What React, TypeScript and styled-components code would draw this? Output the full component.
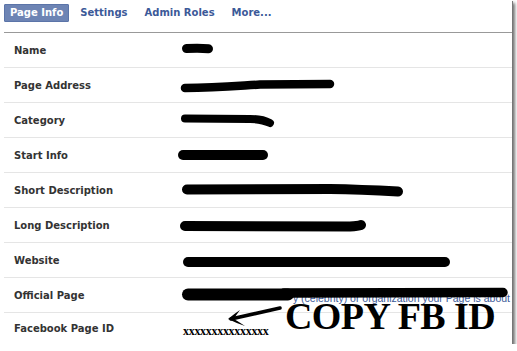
import React from "react";
import styled, { createGlobalStyle } from "styled-components";

const GlobalStyle = createGlobalStyle`
    html, body {
        margin: 0;
        padding: 0;
        background: #fff;
    }
    body {
        font-family: "DejaVu Sans", Verdana, sans-serif;
    }
`;

const Frame = styled.div`
    position: relative;
    width: 512px;
    height: 344px;
    background: #fff;
    overflow: hidden;
    box-shadow: 1px 1px 0 #777, 3px 3px 3px rgba(0, 0, 0, 0.55);
`;

const TabBar = styled.div`
    display: flex;
    align-items: flex-start;
    gap: 5px;
    margin-left: 4px;
    padding-top: 4px;
    height: 28px;
    border-bottom: 1px solid #999;
`;

const Tab = styled.div<{ $active?: boolean }>`
    height: 16px;
    line-height: 16px;
    padding: 0 5px;
    font-size: 10px;
    font-weight: bold;
    border: 1px solid ${(p) => (p.$active ? "#5b74a8" : "transparent")};
    border-radius: 1px;
    background: ${(p) => (p.$active ? "#6d84b4" : "transparent")};
    color: ${(p) => (p.$active ? "#fff" : "#3b5998")};
`;

const Table = styled.div`
    margin-left: 4px;
`;

const Row = styled.div<{ $h?: number }>`
    display: grid;
    grid-template-columns: 162px 1fr;
    align-items: center;
    height: ${(p) => p.$h || 34}px;
    padding-left: 10px;
    border-bottom: 1px solid #e5e5e5;
    &:last-child {
        border-bottom: none;
    }
`;

const Label = styled.div`
    font-size: 10px;
    font-weight: bold;
    color: #333;
`;

const Value = styled.div`
    position: relative;
    display: flex;
    align-items: center;
    height: 100%;
    overflow: hidden;
`;

const HintValue = styled(Value)`
    justify-content: flex-end;
    padding-right: 2px;
`;

const Hint = styled.span`
    flex-shrink: 0;
    margin-top: 5px;
    line-height: 10px;
    white-space: nowrap;
    font-family: "Liberation Sans", Arial, sans-serif;
    font-size: 10.5px;
    color: #3b5998;
`;

const Cover = styled.svg`
    position: absolute;
    left: 0;
    top: 7px;
`;

const PageId = styled.span`
    margin: 5px 0 0 7px;
    font-family: "Liberation Serif", "Times New Roman", serif;
    font-size: 12px;
    font-weight: bold;
    letter-spacing: -0.3px;
    color: #000;
`;

const Note = styled.div`
    position: absolute;
    left: 226px;
    top: 305px;
    display: flex;
    align-items: flex-start;
`;

const NoteText = styled.div`
    margin: -1px 0 0 1px;
    font-family: "Liberation Serif", "Times New Roman", serif;
    font-size: 38px;
    line-height: 24px;
    font-weight: bold;
    letter-spacing: -0.6px;
    color: #000;
`;

type Scribble = { w: number; d: string; sw: number };

const rows: { label: string; scribble?: Scribble }[] = [
    { label: "Name", scribble: { w: 45, d: "M10.5 8.5 C18 8 26 8 32.5 8.7", sw: 9 } },
    { label: "Page Address", scribble: { w: 165, d: "M9 13 C40 13 60 11 84 9.5 L154 9", sw: 8.5 } },
    { label: "Category", scribble: { w: 105, d: "M9 8.5 L74 9 Q86 9 94 13", sw: 8 } },
    { label: "Start Info", scribble: { w: 100, d: "M7 10 L87 10", sw: 10 } },
    { label: "Short Description", scribble: { w: 235, d: "M11 9.5 L154 9 Q184 9.5 222 11.5", sw: 10 } },
    { label: "Long Description", scribble: { w: 195, d: "M9 11 L174 11.5 Q182 11 185 10", sw: 10 } },
    { label: "Website", scribble: { w: 280, d: "M12 12 L269 12", sw: 10 } },
];

const Blob = ({ s }: { s: Scribble }) => (
    <svg width={s.w} height={20} viewBox={`0 0 ${s.w} 20`}>
        <path d={s.d} stroke="#000" strokeWidth={s.sw} strokeLinecap="round" fill="none" />
    </svg>
);

const App = () => {
    return (
        <>
            <GlobalStyle />
            <Frame>
                <TabBar>
                    <Tab $active>Page Info</Tab>
                    <Tab>Settings</Tab>
                    <Tab>Admin Roles</Tab>
                    <Tab>More...</Tab>
                </TabBar>
                <Table>
                    {rows.map((r) => (
                        <Row key={r.label}>
                            <Label>{r.label}</Label>
                            <Value>{r.scribble && <Blob s={r.scribble} />}</Value>
                        </Row>
                    ))}
                    <Row>
                        <Label>Official Page</Label>
                        <HintValue>
                            <Hint>y (celebrity) or organization your Page is about</Hint>
                            <Cover width={336} height={20} viewBox="0 0 336 20">
                                <path d="M12 9.5 L112 9.5" stroke="#000" strokeWidth={12} strokeLinecap="round" fill="none" />
                                <path d="M108 8 L327 7.5" stroke="#000" strokeWidth={9.5} strokeLinecap="round" fill="none" />
                            </Cover>
                        </HintValue>
                    </Row>
                    <Row $h={31}>
                        <Label>Facebook Page ID</Label>
                        <Value>
                            <PageId>xxxxxxxxxxxxxxx</PageId>
                        </Value>
                    </Row>
                </Table>
                <Note>
                    <svg width={58} height={26} viewBox="0 0 58 26">
                        <path d="M54 3 L5 14" stroke="#000" strokeWidth={3.5} strokeLinecap="round" fill="none" />
                        <path d="M2 14 Q8 9 14 5 Q10 10 8 14 Q13 17 19 21 Q10 18 2 14 Z" fill="#000" />
                    </svg>
                    <NoteText>COPY FB ID</NoteText>
                </Note>
            </Frame>
        </>
    );
};

export default App;
